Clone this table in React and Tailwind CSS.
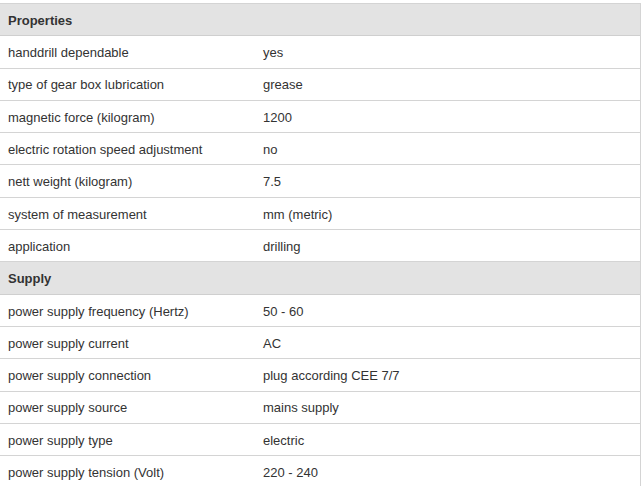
const sections = [
  {
    title: "Properties",
    rows: [
      ["handdrill dependable", "yes"],
      ["type of gear box lubrication", "grease"],
      ["magnetic force (kilogram)", "1200"],
      ["electric rotation speed adjustment", "no"],
      ["nett weight (kilogram)", "7.5"],
      ["system of measurement", "mm (metric)"],
      ["application", "drilling"],
    ],
  },
  {
    title: "Supply",
    rows: [
      ["power supply frequency (Hertz)", "50 - 60"],
      ["power supply current", "AC"],
      ["power supply connection", "plug according CEE 7/7"],
      ["power supply source", "mains supply"],
      ["power supply type", "electric"],
      ["power supply tension (Volt)", "220 - 240"],
    ],
  },
];

export default function App() {
  return (
    <div className="w-[643px] h-[486px] overflow-hidden bg-white pt-[3px] font-['Liberation_Sans',Arial,sans-serif] text-[13px] text-[#333]">
      <div className="w-[641px] border-t border-r border-[#d4d4d4]">
        {sections.map((s) => (
          <div key={s.title}>
            <div className="h-[32.3px] flex items-center pt-[2px] px-2 bg-[#e3e3e3] border-b border-[#cfcfcf] font-bold">
              {s.title}
            </div>
            {s.rows.map(([k, v]) => (
              <div key={k} className="h-[32.3px] flex items-center pt-[2px] border-b border-[#d4d4d4]">
                <div className="w-[263px] pl-2">{k}</div>
                <div>{v}</div>
              </div>
            ))}
          </div>
        ))}
      </div>
    </div>
  );
}
